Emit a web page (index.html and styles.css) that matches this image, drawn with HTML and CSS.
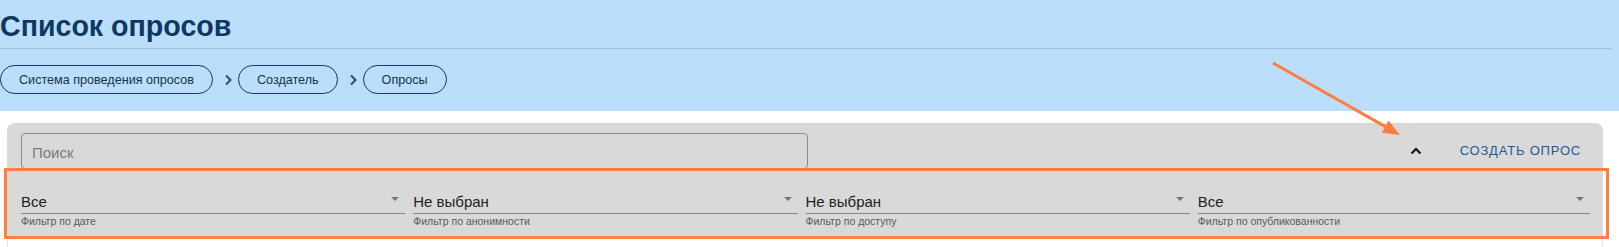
FILE: index.html
```html
<!DOCTYPE html>
<html lang="ru">
<head>
<meta charset="utf-8">
<title>Список опросов</title>
<link rel="stylesheet" href="styles.css">
</head>
<body>
<header class="header">
  <div class="title-row">
    <h1 class="title">Список опросов</h1>
  </div>
  <nav class="crumbs">
    <a class="crumb">Система проведения опросов</a>
    <svg class="crumb-sep" width="8" height="12" viewBox="0 0 8 12"><path d="M2 1.5 L6.5 6 L2 10.5" fill="none" stroke="#1e4f88" stroke-width="2"/></svg>
    <a class="crumb">Создатель</a>
    <svg class="crumb-sep" width="8" height="12" viewBox="0 0 8 12"><path d="M2 1.5 L6.5 6 L2 10.5" fill="none" stroke="#1e4f88" stroke-width="2"/></svg>
    <a class="crumb">Опросы</a>
  </nav>
</header>

<main class="card">
  <div class="toolbar">
    <div class="search">Поиск</div>
    <div class="spacer"></div>
    <svg class="toggle" width="12" height="8" viewBox="0 0 12 8"><path d="M1.5 6.5 L6 2 L10.5 6.5" fill="none" stroke="#111" stroke-width="2"/></svg>
    <button class="create-btn">Создать опрос</button>
  </div>
  <div class="filters">
    <div class="filter">
      <div class="select"><span class="value">Все</span><span class="caret"></span></div>
      <div class="hint">Фильтр по дате</div>
    </div>
    <div class="filter">
      <div class="select"><span class="value">Не выбран</span><span class="caret"></span></div>
      <div class="hint">Фильтр по анонимности</div>
    </div>
    <div class="filter">
      <div class="select"><span class="value">Не выбран</span><span class="caret"></span></div>
      <div class="hint">Фильтр по доступу</div>
    </div>
    <div class="filter">
      <div class="select"><span class="value">Все</span><span class="caret"></span></div>
      <div class="hint">Фильтр по опубликованности</div>
    </div>
  </div>
</main>
<div class="below"></div>

<div class="highlight"></div>
<svg class="pointer" width="1619" height="247" viewBox="0 0 1619 247">
  <line x1="1273" y1="63" x2="1387" y2="127.6" stroke="#ff7f40" stroke-width="3"/>
  <polygon points="1400,135 1381.7,132.7 1388.6,120.5" fill="#ff7f40"/>
</svg>
</body>
</html>
```

FILE: styles.css
```css
* { box-sizing: border-box; }
html, body { margin: 0; padding: 0; }
body {
  background: #ffffff;
  font-family: "Liberation Sans", Arial, sans-serif;
  position: relative;
  width: 1619px;
  height: 247px;
  overflow: hidden;
}

.header {
  background: #bbdefb;
  padding: 0 0 17px 0;
}
.title-row {
  margin-right: 8px;
  padding: 10px 0 6px 0;
  border-bottom: 1px solid #9ebfdb;
}
.title {
  margin: 0;
  font-size: 28.6px;
  line-height: 32px;
  font-weight: 700;
  color: #0c3864;
}
.crumbs {
  margin-top: 16px;
  display: flex;
  align-items: center;
}
.crumb {
  display: inline-flex;
  align-items: center;
  height: 29px;
  padding: 0 18px;
  border: 1px solid #0f3a62;
  border-radius: 15px;
  font-size: 12.6px;
  color: #16324f;
}
.crumb-sep {
  margin: 0 6px 0 11px;
  display: block;
}

.card {
  margin: 12px 16px 0 7px;
  background: #d9d9d9;
  border-radius: 8px 8px 0 0;
  padding: 10px 13px 11px 14px;
}
.toolbar {
  display: flex;
  align-items: center;
  height: 36px;
}
.search {
  width: 787px;
  height: 36px;
  border: 1px solid #8c8c8c;
  border-radius: 4px;
  padding: 2px 0 0 10px;
  display: flex;
  align-items: center;
  font-size: 15px;
  color: #7a7a7a;
}
.spacer { flex: 1; }
.toggle { display: block; margin-right: 22px; }
.create-btn {
  background: none;
  border: 0;
  padding: 0 9px 0 16px;
  font-family: "Liberation Sans", Arial, sans-serif;
  font-size: 13px;
  letter-spacing: 0.8px;
  text-transform: uppercase;
  color: #1f5b98;
  line-height: 20px;
}

.filters {
  margin-top: 24px;
  display: grid;
  grid-template-columns: repeat(4, 1fr);
}
.filter { padding-right: 8px; }
.filter:last-child { padding-right: 0; }
.select {
  display: flex;
  align-items: center;
  justify-content: space-between;
  border-bottom: 1px solid #858585;
  padding-bottom: 2px;
}
.value {
  font-size: 15px;
  line-height: 18px;
  color: #222;
}
.caret {
  width: 0;
  height: 0;
  border-left: 4px solid transparent;
  border-right: 4px solid transparent;
  border-top: 4px solid #767676;
  margin: 0 6px 6px 0;
}
.hint {
  margin-top: 1px;
  font-size: 10.5px;
  line-height: 12px;
  color: #5a5a5a;
}

.below {
  margin: 0 16px 0 7px;
  height: 20px;
  border-left: 1px solid #e6e6e6;
  border-right: 1px solid #e6e6e6;
}

.highlight {
  position: absolute;
  left: 4px;
  top: 168px;
  width: 1605px;
  height: 71px;
  border: 3px solid #ff7f40;
}
.pointer {
  position: absolute;
  left: 0;
  top: 0;
  pointer-events: none;
}
```
